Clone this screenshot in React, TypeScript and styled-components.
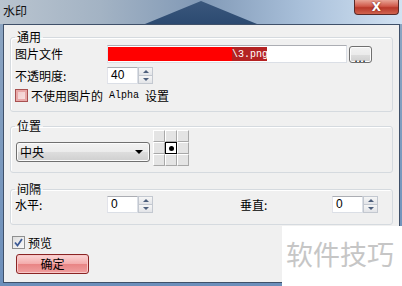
import styled, { createGlobalStyle, css } from "styled-components";

const GlobalStyle = createGlobalStyle`
  html, body {
    margin: 0;
    padding: 0;
  }
  body {
    font-family: "Noto Sans CJK SC", "Liberation Sans", sans-serif;
    font-size: 12px;
    color: #000;
  }
`;

const Window = styled.div`
  position: relative;
  width: 402px;
  height: 286px;
  overflow: hidden;
  display: flex;
  flex-direction: column;
  background: linear-gradient(to bottom, #8ea6c2, #6c8fbb);
`;

const TitleBar = styled.div`
  position: relative;
  height: 24px;
  flex: none;
  display: flex;
  align-items: flex-start;
  justify-content: space-between;
  padding-left: 3px;
  background: linear-gradient(
    to right,
    #b9c4cf 0%,
    #a3b3c4 25%,
    #8199b6 50%,
    #a9c0da 75%,
    #d2e2f2 100%
  );

  &::before {
    content: "";
    position: absolute;
    left: 145px;
    top: 1px;
    width: 112px;
    height: 23px;
    background: linear-gradient(to bottom, #3a577c, #2c4a71);
    clip-path: polygon(50% 0, 100% 100%, 0 100%);
  }
`;

const Title = styled.span`
  position: relative;
  margin-top: 4px;
  line-height: 14px;
  font-size: 12px;
  color: #111;
`;

const CloseButton = styled.div`
  position: relative;
  width: 45px;
  height: 15px;
  margin-right: 3px;
  box-sizing: border-box;
  border: 1px solid #5a2a28;
  border-top: none;
  border-radius: 0 0 4px 4px;
  background: linear-gradient(to bottom, #e8a496 0%, #d0594a 45%, #b8382a 55%, #d0644f 100%);
  display: flex;
  align-items: center;
  justify-content: center;
  color: #fff;
  font-family: "DejaVu Sans", sans-serif;
  font-weight: bold;
  font-size: 12px;
  line-height: 12px;
  text-shadow: 0 0 2px #6a1a10;
`;

const Client = styled.div`
  flex: 1;
  margin: 0 2px 3px 3px;
  border: 1px solid #3f5069;
  background: #f0f0f0;
  padding: 5px 6px 0 6px;
  display: flex;
  flex-direction: column;
`;

const Group = styled.fieldset<{ $top?: number; $pb: number }>`
  margin: ${(p) => p.$top ?? 0}px 0 0 0;
  padding: 0 4px ${(p) => p.$pb}px 4px;
  border: 1px solid #d5dadf;
  border-radius: 3px;
  box-shadow: inset 1px 1px 0 #fff;
  min-inline-size: 0;
`;

const Legend = styled.legend`
  padding: 0 2px;
  line-height: 14px;
  font-size: 12px;
`;

const Rows = styled.div`
  display: flex;
  flex-direction: column;
  gap: 4px;
  padding-top: 1px;
`;

const Row = styled.div<{ $h: number }>`
  display: flex;
  align-items: center;
  height: ${(p) => p.$h}px;
`;

const Label = styled.span<{ $w?: number }>`
  width: ${(p) => p.$w ?? 92}px;
  flex: none;
  line-height: 14px;
  white-space: nowrap;
`;

const fieldBorder = css`
  box-sizing: border-box;
  border: 1px solid #dbdfe6;
  border-top-color: #abadb3;
  border-left-color: #e2e3ea;
  background: #fff;
`;

const FileInput = styled.div`
  ${fieldBorder};
  width: 240px;
  height: 18px;
  padding: 1px 0;
  display: flex;
`;

const Redacted = styled.span`
  width: 124px;
  background: #ff0000;
`;

const Selected = styled.span`
  width: 35px;
  background: #b42222;
  color: #fff;
  font-family: "Liberation Mono", monospace;
  font-size: 10px;
  line-height: 15px;
  white-space: nowrap;
  overflow: hidden;
`;

const Win7Button = styled.button`
  box-sizing: border-box;
  border: 1px solid #707070;
  border-radius: 3px;
  background: linear-gradient(to bottom, #f2f2f2 0%, #ebebeb 50%, #dddddd 51%, #cfcfcf 100%);
  box-shadow: inset 0 0 0 1px #fcfcfc;
  font-family: inherit;
  padding: 0;
`;

const BrowseButton = styled(Win7Button)`
  width: 23px;
  height: 17px;
  margin-left: 2px;
  font-size: 11px;
  line-height: 17px;
  letter-spacing: 1px;
  padding-top: 2px;
`;

const Spin = styled.div`
  display: flex;
  height: 17px;
`;

const SpinInput = styled.div`
  ${fieldBorder};
  width: 31px;
  height: 17px;
  padding-left: 3px;
  font-family: "Liberation Sans", sans-serif;
  font-size: 12px;
  line-height: 15px;
`;

const SpinButtons = styled.div`
  width: 15px;
  height: 17px;
  box-sizing: border-box;
  border: 1px solid #c3c8d0;
  display: flex;
  flex-direction: column;
`;

const SpinHalf = styled.div<{ $down?: boolean }>`
  flex: 1;
  display: flex;
  align-items: center;
  justify-content: center;
  background: linear-gradient(to bottom, #f6f6f6, #e2e4e8);
  border-top: ${(p) => (p.$down ? "1px solid #c3c8d0" : "none")};

  &::after {
    content: "";
    width: 0;
    height: 0;
    border-left: 3px solid transparent;
    border-right: 3px solid transparent;
    ${(p) =>
      p.$down
        ? "border-top: 3px solid #4d5f7c;"
        : "border-bottom: 3px solid #4d5f7c;"}
  }
`;

const SpinBox = ({ value }: { value: string }) => (
  <Spin>
    <SpinInput>{value}</SpinInput>
    <SpinButtons>
      <SpinHalf />
      <SpinHalf $down />
    </SpinButtons>
  </Spin>
);

const CheckRow = styled.div<{ $ml?: number; $mt?: number }>`
  display: flex;
  align-items: center;
  height: 14px;
  margin-left: ${(p) => p.$ml ?? 0}px;
  margin-top: ${(p) => p.$mt ?? 0}px;
`;

const CheckBox = styled.span<{ $tone: "pink" | "plain" }>`
  width: 13px;
  height: 13px;
  flex: none;
  box-sizing: border-box;
  margin-right: 3px;
  display: flex;
  align-items: center;
  justify-content: center;
  ${(p) =>
    p.$tone === "pink"
      ? css`
          border: 1px solid #a85050;
          background: linear-gradient(135deg, #f0c8c8, #f8e4e4);
          box-shadow: inset 0 0 0 2px #e8a8a8;
        `
      : css`
          border: 1px solid #8e8f8f;
          background: linear-gradient(135deg, #dedede, #fafafa);
        `}
`;

const Latin = styled.span`
  font-family: "Liberation Mono", monospace;
  font-size: 10px;
  padding: 0 6px;
`;

const PosRow = styled.div`
  display: flex;
  align-items: flex-start;
  margin-top: -3px;
  height: 38px;
`;

const Combo = styled.div`
  box-sizing: border-box;
  width: 134px;
  height: 20px;
  margin: 12px 0 0 1px;
  border: 1px solid #707070;
  border-radius: 3px;
  background: linear-gradient(to bottom, #f2f2f2 0%, #ebebeb 50%, #dddddd 51%, #cfcfcf 100%);
  box-shadow: inset 0 0 0 1px #fbfbfb;
  display: flex;
  align-items: center;
  justify-content: space-between;
  padding: 0 6px 0 3px;
  line-height: 14px;

  &::after {
    content: "";
    border-left: 4px solid transparent;
    border-right: 4px solid transparent;
    border-top: 4px solid #000;
  }
`;

const PosGrid = styled.div`
  display: grid;
  grid-template-columns: repeat(3, 12px);
  grid-template-rows: repeat(3, 12px);
  margin-left: 3px;
`;

const Cell = styled.div<{ $active?: boolean }>`
  box-sizing: border-box;
  display: flex;
  align-items: center;
  justify-content: center;
  ${(p) =>
    p.$active
      ? css`
          border: 1px solid #000;
          background: #fff;
          &::after {
            content: "";
            width: 5px;
            height: 5px;
            border-radius: 50%;
            background: #000;
          }
        `
      : css`
          background: #e4e4e4;
          border-top: 1px solid #fff;
          border-left: 1px solid #fff;
          border-right: 1px solid #a8a8a8;
          border-bottom: 1px solid #a8a8a8;
        `}
`;

const Gap = styled.div<{ $w: number }>`
  width: ${(p) => p.$w}px;
  flex: none;
`;

const OkButton = styled.button`
  box-sizing: border-box;
  width: 73px;
  height: 20px;
  margin: 5px 0 0 6px;
  border: 1px solid #8a2424;
  border-radius: 3px;
  background: linear-gradient(to bottom, #fbd6d6 0%, #f3aaaa 50%, #e88484 51%, #f0a0a0 100%);
  box-shadow: inset 0 0 0 1px #f8c8c8;
  font-family: inherit;
  font-size: 12px;
  line-height: 14px;
  padding: 0;
`;

const Watermark = styled.div`
  position: absolute;
  left: 282px;
  top: 226px;
  width: 120px;
  height: 60px;
  background: #fff;
  color: #c6c6c6;
  font-size: 27px;
  line-height: 30px;
  display: flex;
  align-items: center;
  padding-left: 4px;
  padding-bottom: 4px;
  box-sizing: border-box;
`;

const CheckMark = () => (
  <svg width="9" height="9" viewBox="0 0 9 9">
    <path d="M1 4.5 L3.5 7.5 L8 1" fill="none" stroke="#3c5a95" strokeWidth="1.8" />
  </svg>
);

export default function App() {
  return (
    <>
      <GlobalStyle />
      <Window>
        <TitleBar>
          <Title>水印</Title>
          <CloseButton>X</CloseButton>
        </TitleBar>
        <Client>
          <Group $pb={9}>
            <Legend>通用</Legend>
            <Rows>
              <Row $h={18}>
                <Label>图片文件</Label>
                <FileInput>
                  <Redacted />
                  <Selected>\3.png</Selected>
                </FileInput>
                <BrowseButton>...</BrowseButton>
              </Row>
              <Row $h={17}>
                <Label>不透明度:</Label>
                <SpinBox value="40" />
              </Row>
              <CheckRow>
                <CheckBox $tone="pink" />
                不使用图片的<Latin>Alpha</Latin>设置
              </CheckRow>
            </Rows>
          </Group>

          <Group $top={7} $pb={4}>
            <Legend>位置</Legend>
            <PosRow>
              <Combo>中央</Combo>
              <PosGrid>
                {Array.from({ length: 9 }, (_, i) => (
                  <Cell key={i} $active={i === 4} />
                ))}
              </PosGrid>
            </PosRow>
          </Group>

          <Group $top={9} $pb={11}>
            <Legend>间隔</Legend>
            <Row $h={17}>
              <Label>水平:</Label>
              <SpinBox value="0" />
              <Gap $w={87} />
              <Label>垂直:</Label>
              <SpinBox value="0" />
            </Row>
          </Group>

          <CheckRow $ml={2} $mt={10}>
            <CheckBox $tone="plain">
              <CheckMark />
            </CheckBox>
            预览
          </CheckRow>
          <div>
            <OkButton>确定</OkButton>
          </div>
        </Client>
        <Watermark>软件技巧</Watermark>
      </Window>
    </>
  );
}
